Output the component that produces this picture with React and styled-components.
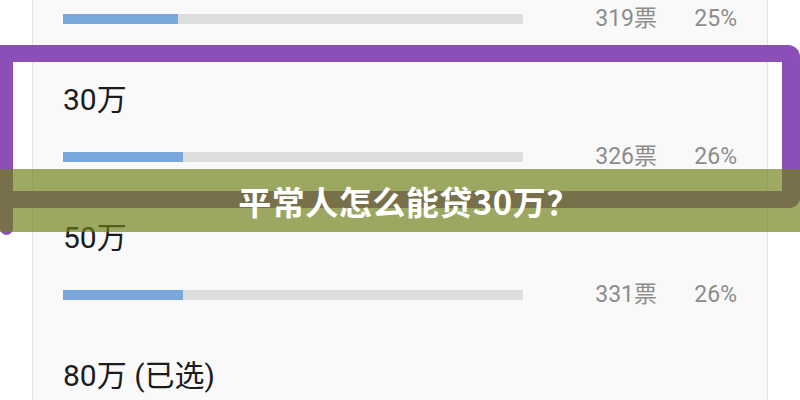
import React from "react";
import styled, { createGlobalStyle } from "styled-components";

// first row is scrolled past its label, last row only shows its label
const options = [
  { votes: 319, percent: 25 },
  { label: "30万", votes: 326, percent: 26 },
  { label: "50万", votes: 331, percent: 26 },
  { label: "80万 (已选)" },
];

const App = () => {
  return (
    <Page>
      <GlobalStyle />
      <Card>
        {options.map((opt, i) => (
          <Option key={i} $partial={!opt.label}>
            {opt.label && <Label>{opt.label}</Label>}
            {opt.votes != null && (
              <BarRow>
                <Track>
                  <Fill style={{ width: `${opt.percent}%` }} />
                </Track>
                <Stat>{opt.votes}票</Stat>
                <Stat>{opt.percent}%</Stat>
              </BarRow>
            )}
          </Option>
        ))}
      </Card>
      <Highlight />
      <Banner>平常人怎么能贷30万？</Banner>
    </Page>
  );
};

const GlobalStyle = createGlobalStyle`
  html, body {
    margin: 0;
    padding: 0;
    background: #fff;
    overflow: hidden;
  }
  body {
    font-family: Roboto, "Noto Sans CJK SC", sans-serif;
  }
`;

const Page = styled.div`
  position: relative;
  width: 800px;
  height: 400px;
  overflow: hidden;
  background: #fff;
`;

const Card = styled.div`
  margin: 0 32px;
  padding: 0 30px;
  height: 400px;
  background: #f9f9f9;
  border-left: 1px solid #e4e4e4;
  border-right: 1px solid #e4e4e4;
`;

const Option = styled.div`
  padding: ${(p) => (p.$partial ? "7px 0 40px" : "14px 0 40px")};
`;

const Label = styled.div`
  font-size: 30px;
  line-height: 30px;
  color: #1c1c1c;
  margin-bottom: 30px;
`;

const BarRow = styled.div`
  display: grid;
  grid-template-columns: 460px 134px 1fr;
  align-items: center;
  height: 24px;
`;

const Track = styled.div`
  height: 10px;
  background: #dedede;
`;

const Fill = styled.div`
  height: 100%;
  background: #7ba8dc;
`;

const Stat = styled.span`
  text-align: right;
  font-size: 23px;
  line-height: 24px;
  color: #8c8c8c;
`;

const Highlight = styled.div`
  position: absolute;
  top: 45px;
  left: 0;
  right: 0;
  height: 129px;
  border: solid #8b4fb7;
  border-width: 17px 18px 17px 13px;
  border-radius: 0 12px 10px 0;
  &::after {
    content: "";
    position: absolute;
    left: -13px;
    top: calc(100% + 17px);
    width: 13px;
    height: 27px;
    background: #8b4fb7;
    border-radius: 0 0 7px 7px;
  }
`;

const Banner = styled.div`
  position: absolute;
  top: 169px;
  left: 0;
  right: 0;
  height: 63px;
  display: flex;
  align-items: center;
  justify-content: center;
  padding-left: 18px;
  background: rgba(110, 128, 23, 0.67);
  color: #fff;
  font-family: "Noto Sans CJK SC", sans-serif;
  font-weight: 700;
  font-size: 33px;
  letter-spacing: 0.5px;
`;

export default App;
